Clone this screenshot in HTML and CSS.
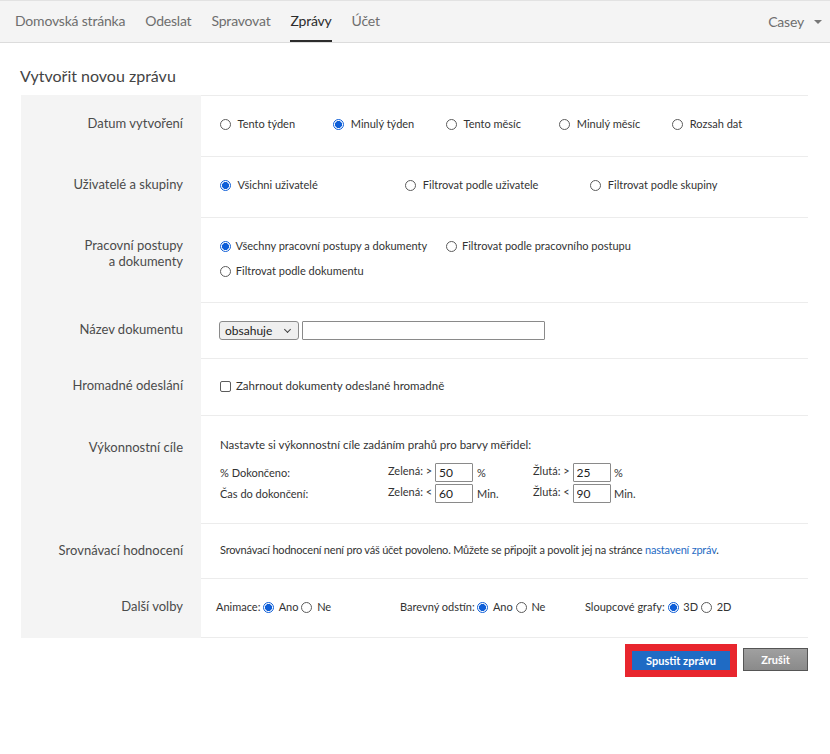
FILE: index.html
```html
<!DOCTYPE html>
<html lang="cs">
<head>
<meta charset="utf-8">
<title>Vytvořit novou zprávu</title>
<link rel="stylesheet" href="styles.css">
</head>
<body>
<nav class="topnav">
  <ul class="nav-items">
    <li>Domovská stránka</li>
    <li>Odeslat</li>
    <li>Spravovat</li>
    <li class="active">Zprávy</li>
    <li>Účet</li>
  </ul>
  <div class="user">Casey <span class="caret"></span></div>
</nav>

<h1 class="title">Vytvořit novou zprávu</h1>

<div class="form">
  <div class="row r-date">
    <div class="lbl">Datum vytvoření</div>
    <div class="fld opts opts-5">
      <label><input type="radio" name="d"> Tento týden</label>
      <label><input type="radio" name="d" checked> Minulý týden</label>
      <label><input type="radio" name="d"> Tento měsíc</label>
      <label><input type="radio" name="d"> Minulý měsíc</label>
      <label><input type="radio" name="d"> Rozsah dat</label>
    </div>
  </div>
  <div class="row r-users">
    <div class="lbl">Uživatelé a skupiny</div>
    <div class="fld opts opts-3">
      <label><input type="radio" name="u" checked> Všichni uživatelé</label>
      <label><input type="radio" name="u"> Filtrovat podle uživatele</label>
      <label><input type="radio" name="u"> Filtrovat podle skupiny</label>
    </div>
  </div>
  <div class="row r-flows">
    <div class="lbl">Pracovní postupy<br>a dokumenty</div>
    <div class="fld flows">
      <div class="flow-line">
        <label><input type="radio" name="w" checked> Všechny pracovní postupy a dokumenty</label>
        <label><input type="radio" name="w"> Filtrovat podle pracovního postupu</label>
      </div>
      <div class="flow-line">
        <label><input type="radio" name="w"> Filtrovat podle dokumentu</label>
      </div>
    </div>
  </div>
  <div class="row r-name">
    <div class="lbl">Název dokumentu</div>
    <div class="fld name">
      <div class="select">obsahuje <span class="chev"></span></div>
      <input class="txt" type="text">
    </div>
  </div>
  <div class="row r-bulk">
    <div class="lbl">Hromadné odeslání</div>
    <div class="fld">
      <label class="check"><input type="checkbox"> Zahrnout dokumenty odeslané hromadně</label>
    </div>
  </div>
  <div class="row r-goals">
    <div class="lbl">Výkonnostní cíle</div>
    <div class="fld goals">
      <div class="goal-intro">Nastavte si výkonnostní cíle zadáním prahů pro barvy měřidel:</div>
      <div class="goal-grid">
        <span>% Dokončeno:</span>
        <span class="thr">Zelená: &gt; <input class="num" type="text" value="50"></span>
        <span>%</span>
        <span class="thr">Žlutá: &gt; <input class="num" type="text" value="25"></span>
        <span>%</span>
        <span>Čas do dokončení:</span>
        <span class="thr">Zelená: &lt; <input class="num" type="text" value="60"></span>
        <span>Min.</span>
        <span class="thr">Žlutá: &lt; <input class="num" type="text" value="90"></span>
        <span>Min.</span>
      </div>
    </div>
  </div>
  <div class="row r-bench">
    <div class="lbl">Srovnávací hodnocení</div>
    <div class="fld">Srovnávací hodnocení není pro váš účet povoleno. Můžete se připojit a povolit jej na stránce <a href="#">nastavení zpráv</a>.</div>
  </div>
  <div class="row r-more">
    <div class="lbl">Další volby</div>
    <div class="fld more">
      <div class="grp g1">Animace: <label><input type="radio" name="a" checked> Ano</label> <label><input type="radio" name="a"> Ne</label></div>
      <div class="grp g2">Barevný odstín: <label><input type="radio" name="b" checked> Ano</label> <label><input type="radio" name="b"> Ne</label></div>
      <div class="grp g3">Sloupcové grafy: <label><input type="radio" name="c" checked> 3D</label> <label><input type="radio" name="c"> 2D</label></div>
    </div>
  </div>
</div>

<div class="actions">
  <div class="run-wrap"><button class="btn-run">Spustit zprávu</button></div>
  <button class="btn-cancel">Zrušit</button>
</div>
</body>
</html>
```
FILE: styles.css
```css
* { box-sizing: border-box; }
body {
  margin: 0;
  font-family: Lato, "Open Sans", sans-serif;
  color: #333;
  background: #fff;
}
.topnav {
  height: 43px;
  background: #f4f4f4;
  border-top: 1px solid #e2e2e2;
  border-bottom: 1px solid #dcdcdc;
  display: flex;
  justify-content: space-between;
  align-items: stretch;
  padding: 0 8px 0 15px;
}
.nav-items {
  list-style: none;
  margin: 0;
  padding: 0;
  display: flex;
  gap: 20px;
}
.nav-items li {
  font-size: 14px;
  letter-spacing: -0.2px;
  color: #6e6e6e;
  line-height: 40px;
  border-bottom: 2px solid transparent;
}
.nav-items li.active {
  color: #2c2c2c;
  border-bottom-color: #2c2c2c;
}
.user {
  font-size: 14px;
  letter-spacing: -0.2px;
  color: #6e6e6e;
  line-height: 40px;
  display: flex;
  align-items: center;
  gap: 10px;
}
.caret {
  width: 0; height: 0;
  border-left: 4px solid transparent;
  border-right: 4px solid transparent;
  border-top: 4px solid #777;
  margin-top: 1px;
}
.title {
  font-weight: 400;
  font-size: 16px;
  color: #444;
  margin: 22px 0 0 20px;
  line-height: 22px;
}
.form {
  margin: 8px 22px 0 21px;
  background: #f4f4f4;
}
.row { display: flex; }
.lbl {
  width: 180px;
  flex: none;
  background: #f4f4f4;
  text-align: right;
  padding: 20px 18px 0 0;
  font-size: 13px;
  line-height: 16px;
  color: #4b4b4b;
}
.fld {
  flex: 1;
  background: #fff;
  border-top: 1px solid #ececec;
  font-size: 11px;
  line-height: 16px;
  color: #333;
  padding: 20px 0 24px 19px;
}
.form .row:last-child .fld { border-bottom: 1px solid #ececec; }
label { white-space: nowrap; }
input[type=radio] {
  appearance: none;
  -webkit-appearance: none;
  width: 11px; height: 11px;
  border: 1px solid #5c5c5c;
  border-radius: 50%;
  margin: 0 4px 0 0;
  vertical-align: -2px;
  background: #fff;
}
input[type=radio]:checked {
  border-color: #0f5fd8;
  background: radial-gradient(circle, #0f5fd8 0 3.2px, #fff 3.8px);
}
input[type=checkbox] {
  appearance: none;
  -webkit-appearance: none;
  width: 11px; height: 11px;
  border: 1px solid #5c5c5c;
  border-radius: 2px;
  margin: 0 2px 0 0;
  vertical-align: -2px;
  background: #fff;
}
.opts { display: flex; }
.opts-5 label { width: 113px; }
.opts-3 label { width: 185px; }
.r-flows .fld { padding: 20px 0 23px 19px; }
.flow-line { display: flex; gap: 19px; }
.flow-line + .flow-line { margin-top: 9px; }
.flow-line input { margin-right: 2px; }
.r-name .lbl { padding-top: 19px; }
.r-name .fld {
  padding: 18px 0 18px 18px;
  display: flex;
  gap: 3px;
}
.select {
  width: 80px;
  height: 19px;
  border: 1px solid #8a8a8a;
  border-radius: 3px;
  background: #efefef;
  font-size: 12px;
  line-height: 17px;
  padding-left: 5px;
  position: relative;
  color: #222;
}
.chev {
  position: absolute;
  right: 8px;
  top: 5px;
  width: 5px; height: 5px;
  border-right: 1px solid #444;
  border-bottom: 1px solid #444;
  transform: rotate(45deg);
}
.txt {
  width: 243px;
  height: 19px;
  border: 1px solid #8a8a8a;
  border-radius: 1px;
  padding: 0;
  margin: 0;
}
.r-bulk .lbl { padding-top: 19px; }
.r-bulk .fld { padding: 19px 0 21px 19px; font-size: 11.5px; }
.r-goals .lbl { padding-top: 24px; }
.r-goals .fld { padding: 21px 0 20px 19px; }
.goal-intro { margin-bottom: 10px; font-size: 11.5px; }
.goal-grid {
  display: grid;
  grid-template-columns: 168px 89px 56px 81px auto;
  align-items: center;
  row-gap: 2px;
}
.thr { white-space: nowrap; }
.num {
  width: 38px;
  height: 19px;
  border: 1px solid #8a8a8a;
  border-radius: 1px;
  padding: 0 0 0 3px;
  font: inherit;
  font-size: 12px;
  color: #222;
  margin: 0 5px 0 0;
  vertical-align: middle;
}
.r-bench .lbl { padding-top: 19px; }
.r-bench .fld { padding: 18px 0 20px 19px; letter-spacing: -0.2px; }
a { color: #1f6bc4; text-decoration: none; }
.r-more .lbl { padding-top: 20px; }
.r-more .fld {
  display: flex;
  padding: 20px 0 22px 15px;
}
.grp { white-space: nowrap; }
.grp input { margin-right: 2px; }
.g1 { width: 184px; }
.g2 { width: 185px; }
.actions {
  display: flex;
  justify-content: flex-end;
  align-items: center;
  gap: 6px;
  margin: 6px 22px 0 0;
}
.run-wrap {
  border: 7px solid #e8262e;
}
.btn-run {
  display: block;
  width: 98px;
  height: 19px;
  border: none;
  background: #1f6bc4;
  color: #fff;
  font-family: Lato, sans-serif;
  font-weight: 700;
  font-size: 11px;
  padding: 0;
}
.btn-cancel {
  width: 65px;
  height: 23px;
  border: 1px solid #555;
  background: linear-gradient(#a0a0a0, #8a8a8a);
  color: #fff;
  font-family: Lato, sans-serif;
  font-weight: 700;
  font-size: 11px;
  padding: 0;
  margin-top: -3px;
}
```
